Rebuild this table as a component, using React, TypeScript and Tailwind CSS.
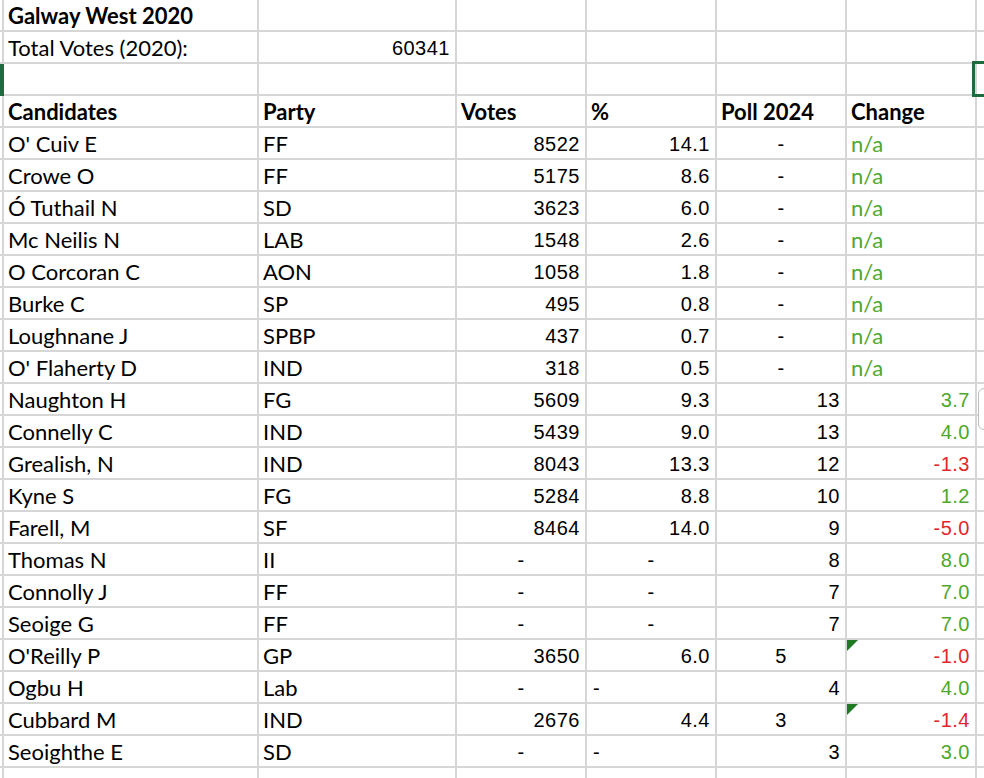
import React from "react";

type Align = "l" | "r" | "c" | "lp";
type Cell = { t?: string; a?: Align; num?: boolean; bold?: boolean; color?: string; flag?: boolean };

const GREEN = "text-[#4ea72e]";
const RED = "text-[#e3262b]";

const widths = ["w-[4px]", "w-[255px]", "w-[198px]", "w-[130px]", "w-[130px]", "w-[130px]", "w-[130px]", "w-[7px]"];

const txt = (t: string, bold = false): Cell => ({ t, a: "l", bold });
const num = (t: string, color?: string): Cell => ({ t, a: "r", num: true, color });
const dash = (a: Align = "c"): Cell => ({ t: "-", a, num: true });
const na: Cell = { t: "n/a", a: "l", color: GREEN };

function cand(
  name: string,
  party: string,
  votes: Cell,
  pct: Cell,
  poll: Cell,
  change: Cell
): Cell[] {
  return [txt(name), txt(party), votes, pct, poll, change];
}

const rows: Cell[][] = [
  [txt("Galway West 2020", true), {}, {}, {}, {}, {}],
  [txt("Total Votes (2020):"), num("60341"), {}, {}, {}, {}],
  [{}, {}, {}, {}, {}, {}],
  [
    txt("Candidates", true),
    txt("Party", true),
    txt("Votes", true),
    txt("%", true),
    txt("Poll 2024", true),
    txt("Change", true),
  ],
  cand("O' Cuiv E", "FF", num("8522"), num("14.1"), dash(), na),
  cand("Crowe O", "FF", num("5175"), num("8.6"), dash(), na),
  cand("Ó Tuthail N", "SD", num("3623"), num("6.0"), dash(), na),
  cand("Mc Neilis N", "LAB", num("1548"), num("2.6"), dash(), na),
  cand("O Corcoran C", "AON", num("1058"), num("1.8"), dash(), na),
  cand("Burke C", "SP", num("495"), num("0.8"), dash(), na),
  cand("Loughnane J", "SPBP", num("437"), num("0.7"), dash(), na),
  cand("O' Flaherty D", "IND", num("318"), num("0.5"), dash(), na),
  cand("Naughton H", "FG", num("5609"), num("9.3"), num("13"), num("3.7", GREEN)),
  cand("Connelly C", "IND", num("5439"), num("9.0"), num("13"), num("4.0", GREEN)),
  cand("Grealish, N", "IND", num("8043"), num("13.3"), num("12"), num("-1.3", RED)),
  cand("Kyne S", "FG", num("5284"), num("8.8"), num("10"), num("1.2", GREEN)),
  cand("Farell, M", "SF", num("8464"), num("14.0"), num("9"), num("-5.0", RED)),
  cand("Thomas N", "II", dash(), dash(), num("8"), num("8.0", GREEN)),
  cand("Connolly J", "FF", dash(), dash(), num("7"), num("7.0", GREEN)),
  cand("Seoige G", "FF", dash(), dash(), num("7"), num("7.0", GREEN)),
  cand("O'Reilly P", "GP", num("3650"), num("6.0"), { t: "5", a: "c", num: true }, { ...num("-1.0", RED), flag: true }),
  cand("Ogbu H", "Lab", dash(), dash("lp"), num("4"), num("4.0", GREEN)),
  cand("Cubbard M", "IND", num("2676"), num("4.4"), { t: "3", a: "c", num: true }, { ...num("-1.4", RED), flag: true }),
  cand("Seoighthe E", "SD", dash(), dash("lp"), num("3"), num("3.0", GREEN)),
  [{}, {}, {}, {}, {}, {}],
];

function alignClass(a?: Align) {
  if (a === "r") return "justify-end pr-[5px]";
  if (a === "c") return "justify-center";
  if (a === "lp") return "justify-start pl-[6px]";
  return "justify-start pl-1";
}

function SheetCell({ cell, w }: { cell: Cell; w: string }) {
  const font = cell.num
    ? "font-['Liberation_Sans',Arial,sans-serif] text-[20px] tracking-[0.5px]"
    : "font-['Lato',sans-serif] text-[22px]";
  return (
    <div
      className={`relative flex h-[32px] shrink-0 items-start whitespace-nowrap border-r-2 border-b-2 border-[#d6d6d6] pt-[2px] leading-[28px] ${w} ${alignClass(
        cell.a
      )} ${font} ${cell.bold ? "font-bold" : ""} ${cell.color ?? "text-black"}`}
    >
      {cell.flag && (
        <span className="absolute top-0 left-0 h-[11px] w-[11px] bg-[#1d7a22] [clip-path:polygon(0_0,100%_0,0_100%)]" />
      )}
      {cell.t}
    </div>
  );
}

export default function App() {
  return (
    <div className="relative h-[778px] w-[984px] overflow-hidden bg-white">
      {rows.map((r, i) => (
        <div key={i} className="flex">
          <div
            className={`h-[32px] shrink-0 ${widths[0]} ${
              i === 2 ? "bg-[#1d6b3f]" : "border-r-2 border-b-2 border-[#d6d6d6]"
            }`}
          />
          {r.map((c, j) => (
            <SheetCell key={j} cell={c} w={widths[j + 1]} />
          ))}
          <div className={`h-[32px] shrink-0 border-b-2 border-[#d6d6d6] ${widths[7]}`} />
        </div>
      ))}

      {/* selected cell outline */}
      <div className="absolute top-[61px] left-[972px] h-[36px] w-[30px] border-[3px] border-[#1e6b40]" />
      {/* paste options button peeking in */}
      <div className="absolute top-[388px] left-[978px] h-[42px] w-[20px] rounded-md border border-[#bdbdbd] bg-white" />
    </div>
  );
}
